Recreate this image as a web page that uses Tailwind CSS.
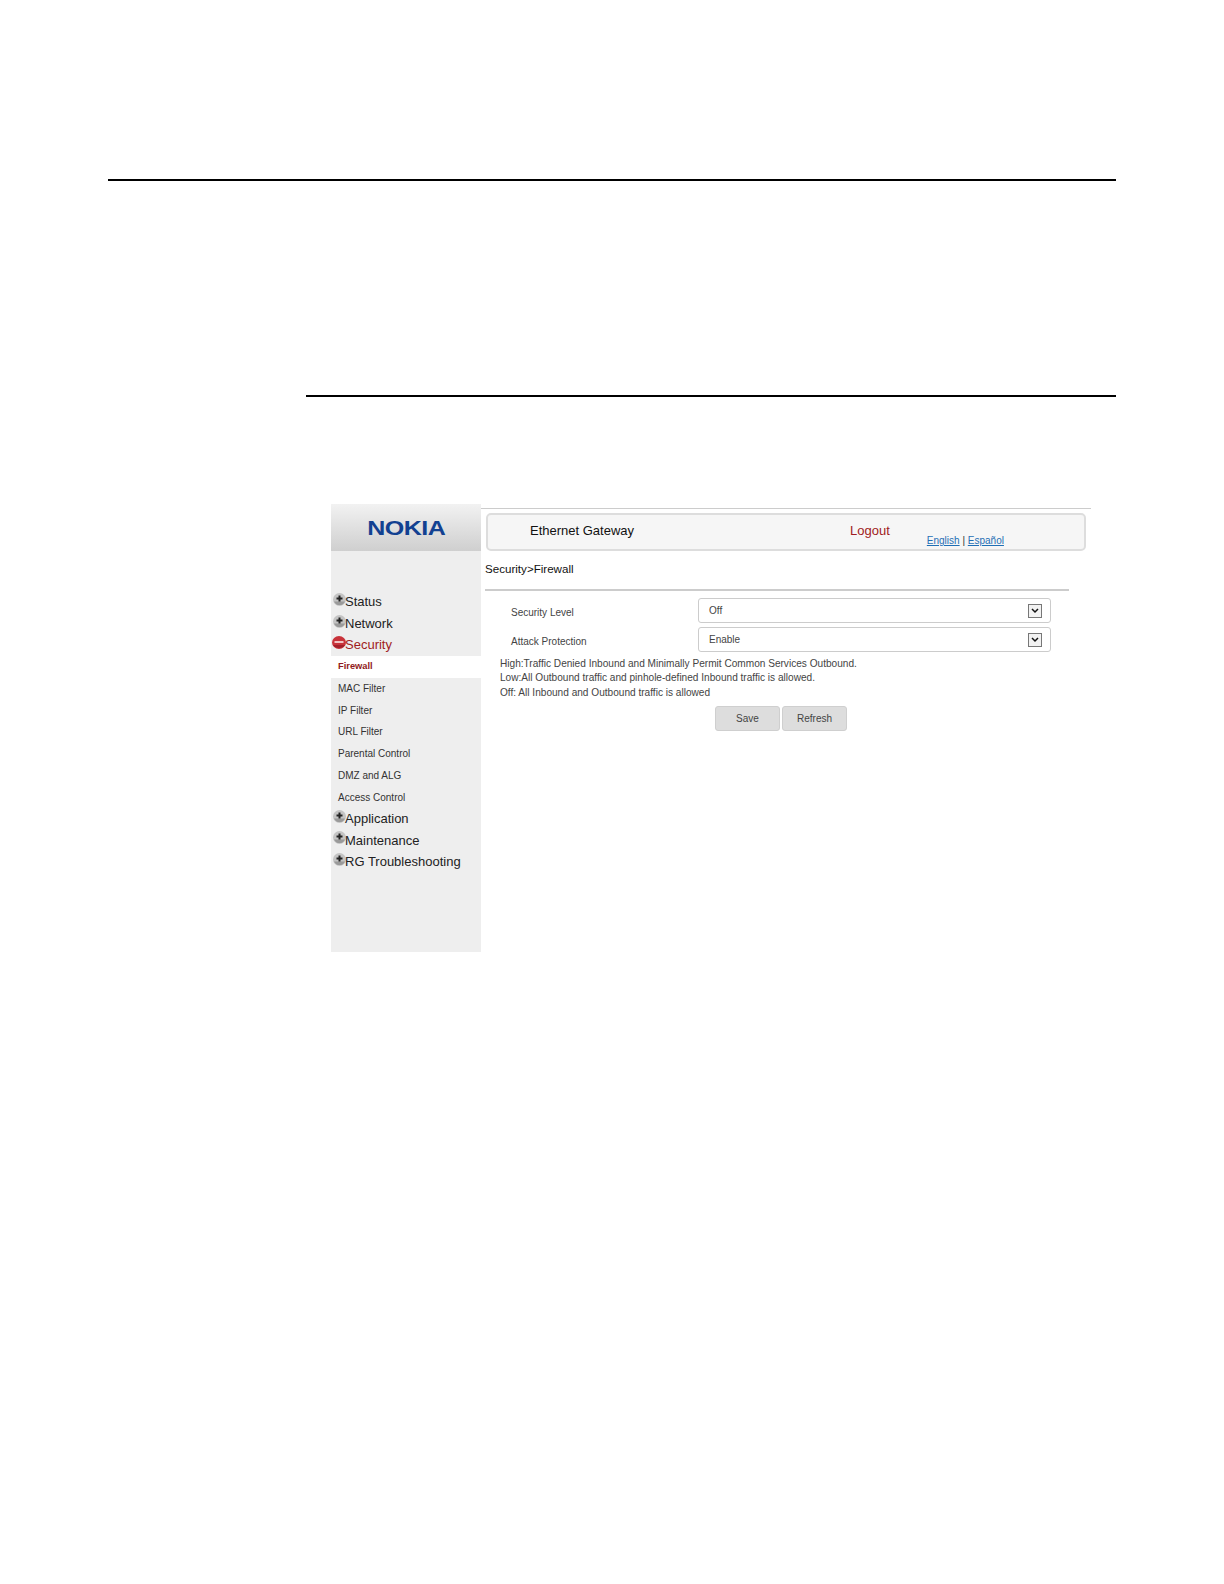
<!doctype html>
<html lang="en">

<head>
  <meta charset="UTF-8" />
  <title>Firewall</title>
  <script src="https://cdn.jsdelivr.net/npm/@tailwindcss/browser@4"></script>
</head>

<body class="bg-white font-['Liberation_Sans',Arial,sans-serif] text-[#222]">
  <div class="w-[1224px] h-[1584px] pt-[179px]">
    <div class="ml-[108px] w-[1008px] h-[2px] bg-black"></div>
    <div class="ml-[306px] mt-[214px] w-[810px] h-[2px] bg-black"></div>

    <!-- screenshot -->
    <div class="ml-[331px] mt-[107px] w-[760px] h-[448px] flex">
      <!-- sidebar -->
      <div class="w-[150px] shrink-0 bg-[#eeeeee] flex flex-col">
        <div class="h-[47px] flex items-center justify-center bg-gradient-to-b from-[#f2f2f2] to-[#cfcfcf]">
          <span class="text-[22px] leading-none font-bold tracking-[-0.5px] text-[#124191] scale-x-[1.14] scale-y-[0.95]">NOKIA</span>
        </div>
        <div class="pt-[40px] flex flex-col">
          <div class="h-[21.7px] flex items-center pl-[2px] text-[13px] text-[#222]">
            <svg class="w-[13px] h-[13px] mb-[5px] -mr-[1px]" viewBox="0 0 13 13"><circle cx="6.5" cy="6.5" r="6.5" fill="#c4c4c4" /><path d="M1 8.5a6 6 0 0 0 11 0z" fill="#9a9a9a" /><rect x="5.5" y="2.5" width="2" height="6" fill="#222" /><rect x="3.5" y="4.5" width="6" height="2" fill="#222" /></svg>
            <span>Status</span>
          </div>
          <div class="h-[21.7px] flex items-center pl-[2px] text-[13px] text-[#222]">
            <svg class="w-[13px] h-[13px] mb-[5px] -mr-[1px]" viewBox="0 0 13 13"><circle cx="6.5" cy="6.5" r="6.5" fill="#c4c4c4" /><path d="M1 8.5a6 6 0 0 0 11 0z" fill="#9a9a9a" /><rect x="5.5" y="2.5" width="2" height="6" fill="#222" /><rect x="3.5" y="4.5" width="6" height="2" fill="#222" /></svg>
            <span>Network</span>
          </div>
          <div class="h-[21.7px] flex items-center pl-[1px] text-[13px] text-[#a01c22]">
            <svg class="w-[14px] h-[13px] mb-[5px] -mr-[1px]" viewBox="0 0 14 13"><ellipse cx="7" cy="6.5" rx="7" ry="6.5" fill="#c8323a" /><path d="M1 9a7 6 0 0 0 12 0z" fill="#a3202a" /><rect x="2.5" y="5" width="9" height="2" fill="#f0c4c4" /></svg>
            <span>Security</span>
          </div>
          <div class="h-[21.7px] flex items-center pl-[7px] text-[9.3px] font-bold text-[#8f1a20] bg-white">Firewall</div>
          <div class="h-[21.7px] flex items-center pl-[7px] text-[10px] text-[#333]">MAC Filter</div>
          <div class="h-[21.7px] flex items-center pl-[7px] text-[10px] text-[#333]">IP Filter</div>
          <div class="h-[21.7px] flex items-center pl-[7px] text-[10px] text-[#333]">URL Filter</div>
          <div class="h-[21.7px] flex items-center pl-[7px] text-[10px] text-[#333]">Parental Control</div>
          <div class="h-[21.7px] flex items-center pl-[7px] text-[10px] text-[#333]">DMZ and ALG</div>
          <div class="h-[21.7px] flex items-center pl-[7px] text-[10px] text-[#333]">Access Control</div>
          <div class="h-[21.7px] flex items-center pl-[2px] text-[13px] text-[#222]">
            <svg class="w-[13px] h-[13px] mb-[5px] -mr-[1px]" viewBox="0 0 13 13"><circle cx="6.5" cy="6.5" r="6.5" fill="#c4c4c4" /><path d="M1 8.5a6 6 0 0 0 11 0z" fill="#9a9a9a" /><rect x="5.5" y="2.5" width="2" height="6" fill="#222" /><rect x="3.5" y="4.5" width="6" height="2" fill="#222" /></svg>
            <span>Application</span>
          </div>
          <div class="h-[21.7px] flex items-center pl-[2px] text-[13px] text-[#222]">
            <svg class="w-[13px] h-[13px] mb-[5px] -mr-[1px]" viewBox="0 0 13 13"><circle cx="6.5" cy="6.5" r="6.5" fill="#c4c4c4" /><path d="M1 8.5a6 6 0 0 0 11 0z" fill="#9a9a9a" /><rect x="5.5" y="2.5" width="2" height="6" fill="#222" /><rect x="3.5" y="4.5" width="6" height="2" fill="#222" /></svg>
            <span>Maintenance</span>
          </div>
          <div class="h-[21.7px] flex items-center pl-[2px] text-[13px] text-[#222]">
            <svg class="w-[13px] h-[13px] mb-[5px] -mr-[1px]" viewBox="0 0 13 13"><circle cx="6.5" cy="6.5" r="6.5" fill="#c4c4c4" /><path d="M1 8.5a6 6 0 0 0 11 0z" fill="#9a9a9a" /><rect x="5.5" y="2.5" width="2" height="6" fill="#222" /><rect x="3.5" y="4.5" width="6" height="2" fill="#222" /></svg>
            <span>RG Troubleshooting</span>
          </div>
        </div>
      </div>

      <!-- main -->
      <div class="flex-1 pt-[4px]">
        <div class="h-[1px] bg-[#cccccc]"></div>
        <div class="ml-[5px] mt-[4px] w-[600px] h-[38px] border-2 border-[#dddddd] rounded-[5px] bg-[#f6f6f6] flex">
          <span class="ml-[42px] mt-[7px] text-[13px] leading-[18px] text-[#111]">Ethernet Gateway</span>
          <span class="ml-[216px] mt-[7px] text-[13px] leading-[18px] text-[#a01c22]">Logout</span>
          <span class="ml-[37px] mt-[19px] text-[10px] leading-[14px] text-[#333]"><span class="text-[#1f6fb5] underline">English</span> | <span class="text-[#1f6fb5] underline">Español</span></span>
        </div>
        <div class="ml-[4px] mt-[10px] text-[11.6px] leading-[16px] text-[#111]">Security&gt;Firewall</div>
        <div class="ml-[4px] mt-[12px] w-[584px] h-[2px] bg-[#cccccc]"></div>

        <div class="ml-[30px] mt-[7px] flex items-center h-[25px] text-[10px] text-[#444]">
          <span class="w-[187px] pt-[4px]">Security Level</span>
          <div class="w-[353px] h-[25px] border border-[#cccccc] rounded-[3px] pl-[10px] pr-[8px] flex items-center justify-between">
            <span>Off</span>
            <span class="w-[14px] h-[14px] border border-[#777] bg-[#f2f2f2] flex items-center justify-center">
              <svg class="w-[8px] h-[6px]" viewBox="0 0 8 6"><path d="M1 1l3 3 3-3" fill="none" stroke="#111" stroke-width="1.5" /></svg>
            </span>
          </div>
        </div>
        <div class="ml-[30px] mt-[4px] flex items-center h-[25px] text-[10px] text-[#444]">
          <span class="w-[187px] pt-[4px]">Attack Protection</span>
          <div class="w-[353px] h-[25px] border border-[#cccccc] rounded-[3px] pl-[10px] pr-[8px] flex items-center justify-between">
            <span>Enable</span>
            <span class="w-[14px] h-[14px] border border-[#777] bg-[#f2f2f2] flex items-center justify-center">
              <svg class="w-[8px] h-[6px]" viewBox="0 0 8 6"><path d="M1 1l3 3 3-3" fill="none" stroke="#111" stroke-width="1.5" /></svg>
            </span>
          </div>
        </div>

        <div class="ml-[19px] mt-[5px] text-[10.1px] leading-[14.4px] text-[#444]">
          <div>High:Traffic Denied Inbound and Minimally Permit Common Services Outbound.</div>
          <div>Low:All Outbound traffic and pinhole-defined Inbound traffic is allowed.</div>
          <div>Off: All Inbound and Outbound traffic is allowed</div>
        </div>

        <div class="ml-[234px] mt-[6px] flex gap-[2px] text-[10px] text-[#444]">
          <button class="w-[65px] h-[25px] bg-[#dddddd] border border-[#cfcfcf] rounded-[3px]">Save</button>
          <button class="w-[65px] h-[25px] bg-[#dddddd] border border-[#cfcfcf] rounded-[3px]">Refresh</button>
        </div>
      </div>
    </div>
  </div>
</body>

</html>
